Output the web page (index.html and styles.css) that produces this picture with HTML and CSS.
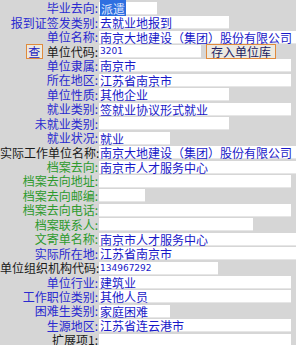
FILE: index.html
```html
<!DOCTYPE html>
<html>
<head>
<meta charset="utf-8">
<link rel="stylesheet" href="styles.css">
</head>
<body>
<div class="form">
  <div class="row"><span class="lbl blue">毕业去向:</span><div class="val"><span class="box w58"><span class="sel">派遣</span></span></div></div>
  <div class="row"><span class="lbl blue">报到证签发类别:</span><div class="val"><span class="box w130">去就业地报到</span></div></div>
  <div class="row"><span class="lbl blue">单位名称:</span><div class="val"><span class="box wfull">南京大地建设（集团）股份有限公司</span></div></div>
  <div class="row"><span class="lbl black lblbtn"><span class="btn cha">查</span><span>单位代码:</span></span><div class="val"><span class="box w102 num">3201</span><span class="btn save">存入单位库</span></div></div>
  <div class="row"><span class="lbl blue">单位隶属:</span><div class="val"><span class="box w192">南京市</span></div></div>
  <div class="row"><span class="lbl blue">所在地区:</span><div class="val"><span class="box w192">江苏省南京市</span></div></div>
  <div class="row"><span class="lbl blue">单位性质:</span><div class="val"><span class="box w130">其他企业</span></div></div>
  <div class="row"><span class="lbl blue">就业类别:</span><div class="val"><span class="box w192">签就业协议形式就业</span></div></div>
  <div class="row"><span class="lbl blue">未就业类别:</span><div class="val"><span class="box w130"></span></div></div>
  <div class="row"><span class="lbl blue">就业状况:</span><div class="val"><span class="box w71">就业</span></div></div>
  <div class="row"><span class="lbl black">实际工作单位名称:</span><div class="val"><span class="box wfull">南京大地建设（集团）股份有限公司</span></div></div>
  <div class="row"><span class="lbl green">档案去向:</span><div class="val"><span class="box wfull">南京市人才服务中心</span></div></div>
  <div class="row"><span class="lbl green">档案去向地址:</span><div class="val"><span class="box w192"></span></div></div>
  <div class="row"><span class="lbl green">档案去向邮编:</span><div class="val"><span class="box w46"></span></div></div>
  <div class="row"><span class="lbl green">档案去向电话:</span><div class="val"><span class="box w192"></span></div></div>
  <div class="row"><span class="lbl green">档案联系人:</span><div class="val"><span class="box w154"></span></div></div>
  <div class="row"><span class="lbl green">文寄单名称:</span><div class="val"><span class="box wfull">南京市人才服务中心</span></div></div>
  <div class="row"><span class="lbl blue">实际所在地:</span><div class="val"><span class="box wfull">江苏省南京市</span></div></div>
  <div class="row"><span class="lbl black">单位组织机构代码:</span><div class="val"><span class="box w119 num">134967292</span></div></div>
  <div class="row"><span class="lbl blue">单位行业:</span><div class="val"><span class="box w192">建筑业</span></div></div>
  <div class="row"><span class="lbl blue">工作职位类别:</span><div class="val"><span class="box w192">其他人员</span></div></div>
  <div class="row"><span class="lbl blue">困难生类别:</span><div class="val"><span class="box w71">家庭困难</span></div></div>
  <div class="row"><span class="lbl blue">生源地区:</span><div class="val"><span class="box w192">江苏省连云港市</span></div></div>
  <div class="row"><span class="lbl black">扩展项1:</span><div class="val"><span class="box w192"></span></div></div>
</div>
</body>
</html>
```
FILE: styles.css
```css
html, body {
  margin: 0;
  padding: 0;
  background: #d6d6d6;
}
body {
  width: 296px;
  height: 345px;
  overflow: hidden;
  font-family: "Noto Sans CJK SC", "Noto Sans", sans-serif;
  font-size: 12px;
}
.form {
  display: flex;
  flex-direction: column;
  padding-top: 1px;
}
.row {
  display: grid;
  grid-template-columns: 98px 1fr;
  height: 14.45px;
  align-items: center;
  white-space: nowrap;
}
.lbl {
  text-align: right;
  line-height: 14px;
  direction: rtl;
  unicode-bidi: plaintext;
}
.lblbtn {
  display: flex;
  justify-content: flex-end;
  align-items: center;
  direction: ltr;
}
.blue { color: #2a2ad0; }
.black { color: #1a1a1a; }
.green { color: #2d9a2d; }
.val {
  display: flex;
  align-items: center;
  padding-left: 1px;
  gap: 5px;
}
.box {
  display: block;
  height: 13px;
  line-height: 13px;
  background: #ffffff;
  color: #1818c8;
  border-bottom: 1px solid #e6e6e6;
  box-sizing: border-box;
  overflow: visible;
  padding-left: 1px;
}
.num {
  font-family: "DejaVu Sans", sans-serif;
  font-size: 9px;
}
.sel {
  background: #2f6fe0;
  color: #dfe8ff;
  padding: 0 1px;
}
.w46 { width: 46px; }
.w58 { width: 58px; }
.w71 { width: 71px; }
.w102 { width: 102px; }
.w119 { width: 119px; }
.w130 { width: 130px; }
.w154 { width: 154px; }
.w192 { width: 192px; }
.wfull { width: 197px; }
.btn {
  display: block;
  box-sizing: border-box;
  border: 1px solid #e08a3c;
  background: #ece9e0;
  height: 15px;
  line-height: 13px;
  text-align: center;
}
.cha {
  width: 17px;
  color: #2222c0;
  margin-right: 4px;
}
.save {
  width: 70px;
  color: #202060;
}
```
